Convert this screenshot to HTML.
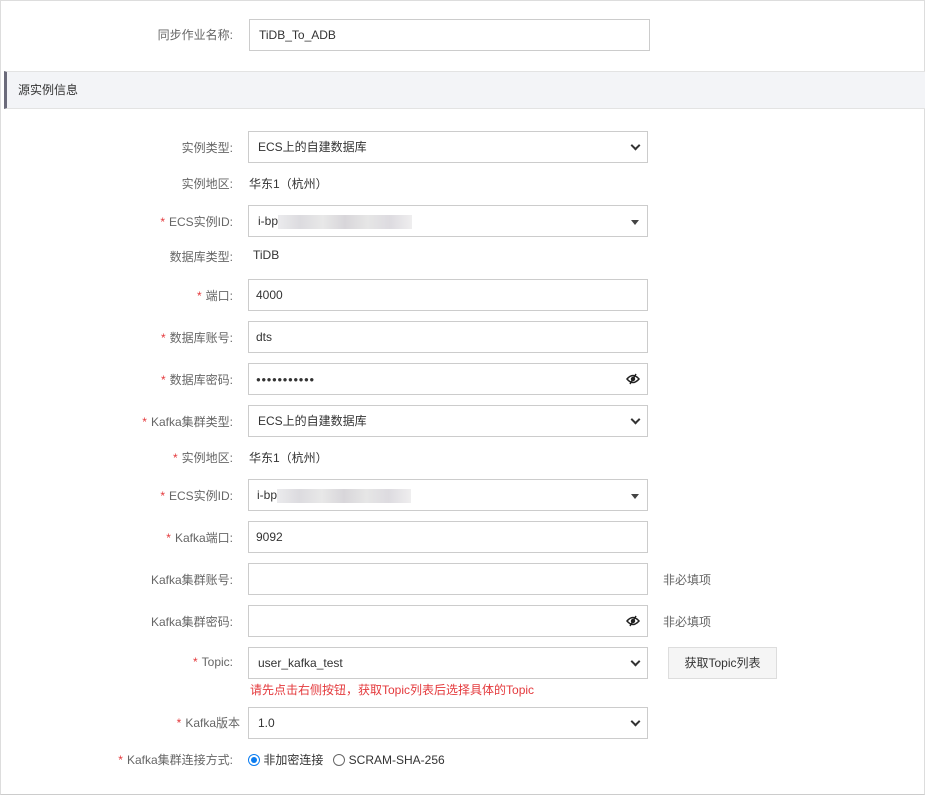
<!DOCTYPE html>
<html><head><meta charset="utf-8"><style>
body{margin:0;width:925px;height:797px;background:#fff;font-family:"Liberation Sans","Noto Sans CJK SC",sans-serif;font-size:12px;color:#333;position:relative;overflow:hidden}
.frame{position:absolute;left:0;top:0;width:923px;height:793px;border:1px solid #ddd;border-bottom:1px solid #ccc}
.hdr{position:absolute;left:4px;top:71px;width:921px;height:38px;background:#f3f4f7;border-top:1px solid #e3e3e3;border-bottom:1px solid #e3e3e3;border-left:3px solid #6b6b7b;box-sizing:border-box}
.hdr span{position:absolute;left:11px;top:9px;color:#333}
.l{position:absolute;right:692px;color:#666;white-space:nowrap}
.l b{color:#e4393c;font-weight:normal;margin-right:4px}
.i{position:absolute;left:248px;width:400px;height:32px;border:1px solid #ccc;box-sizing:border-box;padding-left:9px;line-height:30px;color:#333}
.v{position:absolute;left:249px;color:#333}
.chev{position:absolute;right:8px;top:10px;width:5px;height:5px;border-right:2px solid #333;border-bottom:2px solid #333;transform:rotate(45deg)}
.tri{position:absolute;right:8px;top:14px;border:4px solid transparent;border-top:5px solid #444}
.blur{display:inline-block;width:134px;height:14px;vertical-align:middle;background:linear-gradient(90deg,#ebebed,#dcdbdf,#e8e8e8,#d8d6da,#e6e6e6,#dddbe0,#efeeef)}
.eye{position:absolute;right:7px;top:8px}
.dots{font-size:8px;letter-spacing:0.5px;vertical-align:1px}
.opt{position:absolute;left:663px;color:#666}
</style></head><body>
<div class="frame"></div>
<div class="l" style="top:26px">同步作业名称:</div>
<div class="i" style="top:19px;left:249px;width:401px">TiDB_To_ADB</div>
<div class="hdr"><span>源实例信息</span></div>

<div class="l" style="top:139px">实例类型:</div>
<div class="i" style="top:131px">ECS上的自建数据库<i class="chev"></i></div>
<div class="l" style="top:175px">实例地区:</div><div class="v" style="top:175px">华东1（杭州）</div>
<div class="l" style="top:213px"><b>*</b>ECS实例ID:</div>
<div class="i" style="top:205px">i-bp<span class="blur"></span><i class="tri"></i></div>
<div class="l" style="top:248px">数据库类型:</div><div class="v" style="top:248px;left:253px">TiDB</div>
<div class="l" style="top:287px"><b>*</b>端口:</div>
<div class="i" style="top:279px;padding-left:7px">4000</div>
<div class="l" style="top:329px"><b>*</b>数据库账号:</div>
<div class="i" style="top:321px;padding-left:7px">dts</div>
<div class="l" style="top:371px"><b>*</b>数据库密码:</div>
<div class="i" style="top:363px;padding-left:7px"><span class="dots">●●●●●●●●●●●</span><svg class="eye" width="14" height="14" viewBox="0 0 14 14"><path d="M1 7Q7 0 13 7Q7 14 1 7Z" fill="none" stroke="#222" stroke-width="1.5"/><circle cx="7" cy="7" r="2.2" fill="#222"/><path d="M10 2L4 12" stroke="#222" stroke-width="1.5"/></svg></div>
<div class="l" style="top:413px"><b>*</b>Kafka集群类型:</div>
<div class="i" style="top:405px">ECS上的自建数据库<i class="chev"></i></div>
<div class="l" style="top:449px"><b>*</b>实例地区:</div><div class="v" style="top:449px">华东1（杭州）</div>
<div class="l" style="top:487px"><b>*</b>ECS实例ID:</div>
<div class="i" style="top:479px;padding-left:8px">i-bp<span class="blur"></span><i class="tri"></i></div>
<div class="l" style="top:529px"><b>*</b>Kafka端口:</div>
<div class="i" style="top:521px;padding-left:7px">9092</div>
<div class="l" style="top:571px">Kafka集群账号:</div>
<div class="i" style="top:563px"></div><div class="opt" style="top:571px">非必填项</div>
<div class="l" style="top:613px">Kafka集群密码:</div>
<div class="i" style="top:605px"><svg class="eye" width="14" height="14" viewBox="0 0 14 14"><path d="M1 7Q7 0 13 7Q7 14 1 7Z" fill="none" stroke="#222" stroke-width="1.5"/><circle cx="7" cy="7" r="2.2" fill="#222"/><path d="M10 2L4 12" stroke="#222" stroke-width="1.5"/></svg></div><div class="opt" style="top:613px">非必填项</div>
<div class="l" style="top:655px"><b>*</b>Topic:</div>
<div class="i" style="top:647px">user_kafka_test<i class="chev"></i></div>
<div style="position:absolute;left:668px;top:647px;width:109px;height:32px;border:1px solid #ddd;background:#f5f5f5;box-sizing:border-box;text-align:center;line-height:30px;color:#333">获取Topic列表</div>
<div style="position:absolute;left:250px;top:681px;color:#e4393c">请先点击右侧按钮，获取Topic列表后选择具体的Topic</div>
<div class="l" style="top:714px;right:685px"><b>*</b>Kafka版本</div>
<div class="i" style="top:707px">1.0<i class="chev"></i></div>
<div class="l" style="top:751px"><b>*</b>Kafka集群连接方式:</div>
<div style="position:absolute;left:248px;top:751px;color:#333;white-space:nowrap">
<span style="display:inline-block;width:10px;height:10px;border:1px solid #0b7cf0;border-radius:50%;vertical-align:-2px;position:relative"><i style="position:absolute;left:2px;top:2px;width:6px;height:6px;border-radius:50%;background:#0b7cf0"></i></span> 非加密连接&nbsp;&nbsp;
<span style="display:inline-block;width:10px;height:10px;border:1px solid #666;border-radius:50%;vertical-align:-2px"></span> SCRAM-SHA-256</div>
</body></html>
